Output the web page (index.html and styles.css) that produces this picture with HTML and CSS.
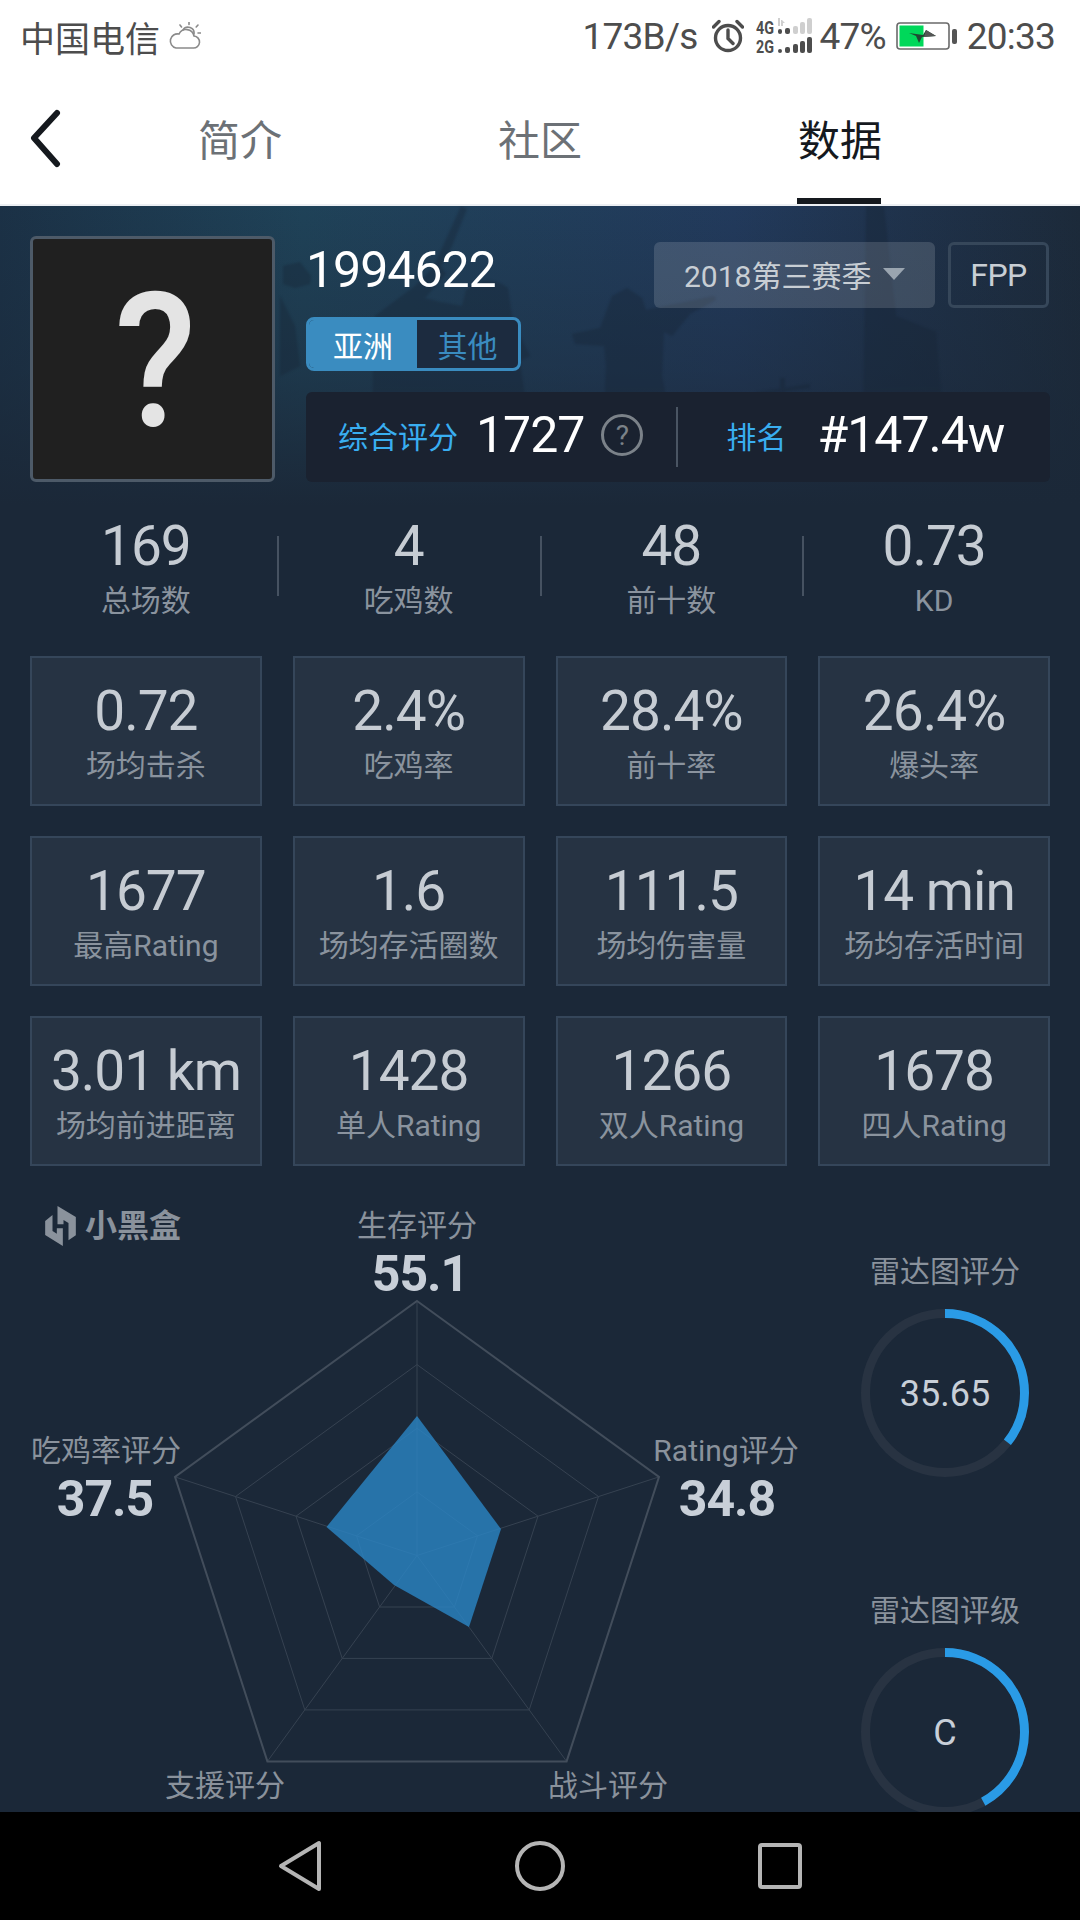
FILE: index.html
```html
<!DOCTYPE html>
<html lang="zh">
<head>
<meta charset="utf-8">
<title>数据</title>
<link rel="stylesheet" href="styles.css">
</head>
<body>
<div class="screen">
  <div class="statusbar">
    <div class="status-left">
      <span>中国电信</span>
      <svg class="ic-weather" width="32" height="28" viewBox="0 0 32 28" fill="none" stroke="#8a8a8a" stroke-width="1.6" stroke-linecap="round">
        <path d="M7 26h17a6 6 0 0 0 1-12 8 8 0 0 0-15-2 7 7 0 0 0-3 14z" fill="#fff"/>
        <path d="M14 8a6 6 0 0 1 11 4M20 0v2.500M11 3l1.500 2M29 3l-1.800 2M31.500 11h-2.500"/>
      </svg>
    </div>
    <div class="status-right">
      <span class="st-speed">173B/s</span>
      <svg class="st-alarm" width="32" height="34" viewBox="0 0 32 34" fill="none" stroke="#4d4d4d" stroke-width="3.400">
        <circle cx="16" cy="19" r="12.500"/>
        <path d="M16 11v8.500l5 5M1.500 8 7 2.500M30.500 8 25 2.500" stroke-linecap="round"/>
      </svg>
      <svg class="st-net" width="57" height="36" viewBox="0 0 57 36">
        <text class="net-text" x="0" y="15.500" textLength="18" lengthAdjust="spacingAndGlyphs">4G</text>
        <text class="net-text" x="0" y="35" textLength="18" lengthAdjust="spacingAndGlyphs">2G</text>
        <g fill="#cfcfcf">
          <rect x="37" y="8" width="5" height="8" rx="2"/><rect x="44" y="4" width="5" height="12" rx="2"/><rect x="51" y="0" width="5" height="16" rx="2"/>
          <path d="M22 0h2v8h-2zM26 2l3 3h-2v3h-2V2z"/>
        </g>
        <g fill="#4d4d4d">
          <rect x="22" y="11" width="4" height="5" rx="2"/><rect x="29" y="10" width="5" height="6" rx="2"/>
          <rect x="22" y="31" width="4" height="4" rx="2"/><rect x="29" y="29" width="5" height="6" rx="2"/><rect x="37" y="26" width="5" height="9" rx="2"/><rect x="44" y="23" width="5" height="12" rx="2"/><rect x="51" y="19" width="5" height="16" rx="2"/>
        </g>
      </svg>
      <span>47%</span>
      <svg width="61" height="28" viewBox="0 0 61 28">
        <rect x="1" y="1" width="52" height="26" rx="3" fill="#fff" stroke="#6a6a6a" stroke-width="1.600"/>
        <rect x="3.500" y="3.500" width="24" height="21" fill="#00d85a"/>
        <path d="M13 11l14 2 3-5 10 6-14 1-3 6-3-7z" fill="#1f4a33"/>
        <path d="M30 8l10 6-12 1z" fill="#555"/>
        <rect x="56" y="7" width="5" height="15" rx="2" fill="#555"/>
      </svg>
      <span>20:33</span>
    </div>
  </div>

  <nav class="nav">
    <svg class="back" width="90" height="60" viewBox="0 0 90 60" fill="none" stroke="#15191e" stroke-width="6" stroke-linecap="round" stroke-linejoin="round">
      <path d="M57 4 34 29l23 26" />
    </svg>
    <div class="tab">简介</div>
    <div class="tab">社区</div>
    <div class="tab tab-active">数据</div>
  </nav>

  <main class="main">
    <div class="hero-bg">
      <svg class="hero-art" width="1080" height="300" viewBox="0 0 1080 300">
        <g fill="#152436" fill-opacity=".36">
          <path d="M283 60 300 56 311 70 310 78 295 82 283 78ZM280 90 295 120 300 160 280 170Z"/>
          <path d="M461 0 467 3 452 40 441 60 446 68 425 92 440 96 462 100 466 84Q487 66 508 82L512 110 520 130 530 150 520 155 540 300H390L372 200 375 110 415 80 433 62Z"/>
          <path d="M612 90 627 82 642 92 646 104 714 90 716 94 690 108 682 118 672 130 664 126 662 170 668 200 672 300H600L606 160 604 140 575 138 572 128 600 122Z"/>
          <path d="M780 172h5v128h-5zM756 186l54-8v4l-54 8zM830 245h190v55H830zM690 300l36-24 40 6 34-14 40 20v12z"/>
          <path d="M866 0h18l12 110 40 16 8 100 30 74H862z"/>
        </g>
        <g fill="none" stroke="#152436" stroke-opacity=".4" stroke-width="1.500">
          <path d="M670 272l112-52 90-16M690 282l92-40 100-14"/>
        </g>
      </svg>
    </div>

    <section class="profile">
      <div class="avatar"><span class="avatar-mark">?</span></div>
      <div class="profile-info">
        <div class="profile-top">
          <div class="name-block">
            <div class="name">1994622</div>
            <div class="segmented">
              <div class="seg seg-on">亚洲</div>
              <div class="seg">其他</div>
            </div>
          </div>
          <div class="season">2018第三赛季<span class="caret"></span></div>
          <div class="mode">FPP</div>
        </div>
        <div class="rank-bar">
          <span class="rank-key">综合评分</span>
          <span class="rank-val rank-score">1727</span>
          <span class="help">?</span>
          <span class="rank-sep"></span>
          <span class="rank-key">排名</span>
          <span class="rank-val rank-pos">#147.4w</span>
        </div>
      </div>
    </section>

    <section class="stats">
      <div class="stat"><div class="val">169</div><div class="lbl">总场数</div></div>
      <div class="stat"><div class="val">4</div><div class="lbl">吃鸡数</div></div>
      <div class="stat"><div class="val">48</div><div class="lbl">前十数</div></div>
      <div class="stat"><div class="val">0.73</div><div class="lbl">KD</div></div>
    </section>

    <section class="cards">
      <div class="card"><div class="val">0.72</div><div class="lbl">场均击杀</div></div>
      <div class="card"><div class="val">2.4%</div><div class="lbl">吃鸡率</div></div>
      <div class="card"><div class="val">28.4%</div><div class="lbl">前十率</div></div>
      <div class="card"><div class="val">26.4%</div><div class="lbl">爆头率</div></div>
      <div class="card"><div class="val">1677</div><div class="lbl">最高Rating</div></div>
      <div class="card"><div class="val">1.6</div><div class="lbl">场均存活圈数</div></div>
      <div class="card"><div class="val">111.5</div><div class="lbl">场均伤害量</div></div>
      <div class="card"><div class="val">14 min</div><div class="lbl">场均存活时间</div></div>
      <div class="card"><div class="val">3.01 km</div><div class="lbl">场均前进距离</div></div>
      <div class="card"><div class="val">1428</div><div class="lbl">单人Rating</div></div>
      <div class="card"><div class="val">1266</div><div class="lbl">双人Rating</div></div>
      <div class="card"><div class="val">1678</div><div class="lbl">四人Rating</div></div>
    </section>

    <section class="chart">
      <svg class="radar" width="1080" height="646" viewBox="0 0 1080 646" fill="none">
        <g class="grid-lines">
          <path d="M417 389.500V135M417 389.500 659 310.900M417 389.500 566.600 595.400M417 389.500 267.400 595.400M417 389.500 175 310.900"/>
          <path d="M417 198.600 598.500 330.500 529.200 543.900H304.800L235.500 330.500Z"/>
          <path d="M417 262.250 538 350.200 491.800 492.400H342.200L296 350.200Z"/>
          <path d="M417 325.900 477.500 369.800 454.400 441H379.600L356.500 369.800Z"/>
        </g>
        <path class="grid-outer" d="M417 135 659 310.900 566.600 595.400H267.400L175 310.900Z"/>
        <path class="radar-data" d="M417 250 501 363 469 461 394 419 326.500 361Z"/>
      </svg>

      <div class="logo">
        <svg width="31" height="40" viewBox="15 15 92 120" fill="#8a929c">
          <path d="M15 60 37 42V90L50 98V82H68V135L15 102Z"/>
          <path d="M52 15 107 48V103L85 118V66L70 57V70H52Z"/>
        </svg>
        <span>小黑盒</span>
      </div>

      <div class="axis axis-top"><div class="axis-name">生存评分</div><div class="axis-val">55.1</div></div>
      <div class="axis axis-left"><div class="axis-name">吃鸡率评分</div><div class="axis-val">37.5</div></div>
      <div class="axis axis-right"><div class="axis-name">Rating评分</div><div class="axis-val">34.8</div></div>
      <div class="axis axis-bl"><div class="axis-name">支援评分</div></div>
      <div class="axis axis-br"><div class="axis-name">战斗评分</div></div>

      <div class="gauges">
        <div class="gauge">
          <div class="axis-name">雷达图评分</div>
          <div class="ring">
            <svg width="168" height="168" viewBox="0 0 168 168" fill="none">
              <circle class="ring-track" cx="84" cy="84" r="79.500"/>
              <circle class="ring-value" cx="84" cy="84" r="79.500" pathLength="100" stroke-dasharray="35.65 100" transform="rotate(-90 84 84)"/>
            </svg>
            <span class="ring-text">35.65</span>
          </div>
        </div>
        <div class="gauge">
          <div class="axis-name">雷达图评级</div>
          <div class="ring">
            <svg width="168" height="168" viewBox="0 0 168 168" fill="none">
              <circle class="ring-track" cx="84" cy="84" r="79.500"/>
              <circle class="ring-value" cx="84" cy="84" r="79.500" pathLength="100" stroke-dasharray="42 100" transform="rotate(-90 84 84)"/>
            </svg>
            <span class="ring-text">C</span>
          </div>
        </div>
      </div>
    </section>
  </main>

  <footer class="sysnav">
    <svg width="60" height="60" viewBox="0 0 60 60"><path d="M49 7V53L11 30Z"/></svg>
    <svg width="60" height="60" viewBox="0 0 60 60"><circle cx="30" cy="30" r="23"/></svg>
    <svg width="60" height="60" viewBox="0 0 60 60"><rect x="10" y="9" width="40" height="42" rx="2"/></svg>
  </footer>
</div>
</body>
</html>
```
FILE: styles.css
```css
* { box-sizing: border-box; }
html, body { margin: 0; padding: 0; }
body {
  font-family: Roboto, "Noto Sans CJK SC", sans-serif;
  background: #000;
}
.screen {
  width: 1080px;
  height: 1920px;
  display: flex;
  flex-direction: column;
  overflow: hidden;
  background: #1b2838;
}

/* status bar */
.statusbar {
  height: 70px;
  flex: none;
  background: #fff;
  color: #4d4d4d;
  display: flex;
  justify-content: space-between;
  align-items: center;
  padding: 2px 25px 0 20px;
}
.status-left { display: flex; align-items: center; gap: 9px; font-size: 35px; }
.status-right { display: flex; align-items: center; gap: 10px; font-size: 37px; letter-spacing: -.8px; }
.st-alarm { margin-left: 4px; }
.st-net { margin-left: 2px; margin-right: -3px; }
.net-text { font-size: 18px; font-weight: 700; fill: #4d4d4d; letter-spacing: 0; }

/* tab bar */
.nav {
  height: 136px;
  flex: none;
  background: #fff;
  border-bottom: 2px solid #eceff3;
  display: flex;
  align-items: stretch;
}
.back { align-self: center; margin-top: 4px; flex: none; }
.tab {
  width: 300px;
  position: relative;
  display: flex;
  align-items: center;
  justify-content: center;
  font-size: 42px;
  color: #6c7176;
}
.tab-active { color: #15191e; }
.tab-active::after {
  content: "";
  position: absolute;
  left: 107px;
  bottom: 0;
  width: 84px;
  height: 6px;
  background: #15191e;
}

/* main area */
.main {
  flex: 1;
  min-height: 0;
  position: relative;
  padding: 30px 30px 0;
  display: flex;
  flex-direction: column;
}
.hero-bg {
  position: absolute;
  left: 0;
  top: 0;
  width: 1080px;
  height: 300px;
  background:
    linear-gradient(180deg, rgba(27,40,56,0) 0%, rgba(27,40,56,.4) 55%, #1b2838 100%),
    linear-gradient(90deg, #1b3146 0%, #1f4258 28%, #223a5c 68%, #1c2a3a 100%);
}
.hero-art {
  display: block;
  filter: blur(1px);
  -webkit-mask-image: linear-gradient(180deg, #000 60%, transparent 92%);
  mask-image: linear-gradient(180deg, #000 60%, transparent 92%);
}
.profile, .stats, .cards, .chart { position: relative; }

.profile { display: flex; gap: 31px; height: 246px; flex: none; }
.avatar {
  width: 245px;
  height: 246px;
  flex: none;
  background: #202020;
  border: 3px solid #4d5a68;
  border-radius: 6px;
  display: flex;
  align-items: center;
  justify-content: center;
  font-size: 187px;
  line-height: 1;
  font-weight: 500;
  color: #e4e4e4;
}
.avatar-mark { display: inline-block; transform: translate(3px, 3px) scaleX(.9); }
.profile-info { flex: 1; display: flex; flex-direction: column; justify-content: space-between; }
.profile-top { display: flex; align-items: flex-start; }
.name-block { flex: 1; }
.name { font-size: 50px; letter-spacing: -1px; line-height: 60px; color: #fff; margin-top: 4px; }
.segmented {
  width: 215px;
  height: 54px;
  margin-top: 17px;
  display: flex;
  border: 3px solid #3a8cc0;
  border-radius: 8px;
  overflow: hidden;
  font-size: 30px;
  color: #3a8cc0;
  background: #1c2b3f;
}
.seg { flex: 1; display: flex; align-items: center; justify-content: center; }
.seg-on { flex: none; width: 108px; background: #3a8cc0; color: #fff; }
.season {
  width: 281px;
  height: 66px;
  margin-top: 6px;
  background: rgba(255,255,255,.14);
  border-radius: 6px;
  display: flex;
  align-items: center;
  padding: 0 0 3px 30px;
  font-size: 30px;
  color: #c8ced4;
}
.caret {
  width: 0;
  height: 0;
  margin-left: 12px;
  border-left: 11px solid transparent;
  border-right: 11px solid transparent;
  border-top: 12px solid #9aa5b0;
}
.mode {
  width: 101px;
  height: 66px;
  margin: 6px 1px 0 13px;
  border: 3px solid #36475a;
  border-radius: 6px;
  display: flex;
  align-items: center;
  justify-content: center;
  font-size: 32px;
  letter-spacing: -.5px;
  color: #c8ced4;
}
.rank-bar {
  height: 90px;
  background: #1a2230;
  border-radius: 6px;
  display: flex;
  align-items: center;
  padding: 0 0 4px 32px;
  color: #fff;
}
.rank-key { font-size: 30px; color: #39aef0; }
.rank-val { font-size: 50px; letter-spacing: -1px; }
.rank-score { margin-left: 18px; }
.help {
  width: 42px;
  height: 42px;
  margin-left: 17px;
  border: 3px solid #7b8289;
  border-radius: 50%;
  display: flex;
  align-items: center;
  justify-content: center;
  font-size: 28px;
  color: #7b8289;
}
.rank-sep { width: 2px; height: 60px; margin: 4px 48px 0 33px; background: #4a5563; }
.rank-pos { margin-left: 31px; }

.val { font-size: 55px; letter-spacing: -1px; line-height: 60px; margin-top: 1px; color: #c6ccd3; white-space: nowrap; }
.lbl { font-size: 30px; line-height: 40px; margin-top: 5px; color: #8a939e; white-space: nowrap; }

.stats {
  flex: none;
  margin-top: 33px;
  display: grid;
  grid-template-columns: repeat(4, 1fr);
  column-gap: 31px;
  text-align: center;
}
.stat { position: relative; }
.stat + .stat::before {
  content: "";
  position: absolute;
  left: -16px;
  top: 21px;
  width: 2px;
  height: 60px;
  background: #465261;
}

.cards {
  flex: none;
  margin-top: 35px;
  display: grid;
  grid-template-columns: repeat(4, 1fr);
  column-gap: 31px;
  row-gap: 30px;
  text-align: center;
}
.card {
  height: 150px;
  padding-top: 22px;
  background: #263343;
  border: 2px solid #35465a;
}

/* radar diagram */
.chart {
  flex: 1;
  min-height: 0;
  margin: 0 -30px;
  overflow: hidden;
}
.radar { position: absolute; left: 0; top: 0; }
.grid-lines path { stroke: #364251; stroke-width: 1; }
.grid-outer { stroke: #424d5b; stroke-width: 2; }
.radar-data { fill: #2a86c6; fill-opacity: .8; }

.logo {
  position: absolute;
  left: 45px;
  top: 40px;
  display: flex;
  align-items: center;
  gap: 9px;
  font-size: 32px;
  line-height: 40px;
  font-weight: 700;
  color: #8a929c;
}
.axis {
  position: absolute;
  width: 240px;
  margin-left: -120px;
  text-align: center;
}
.axis-name { font-size: 30px; line-height: 40px; color: #8a929c; white-space: nowrap; }
.axis-val { font-size: 50px; letter-spacing: -1px; line-height: 50px; margin-top: 3px; font-weight: 700; color: #c8cfd8; }
.axis-top { left: 417px; top: 40px; }
.axis-top .axis-val { margin-left: 6px; }
.axis-left { left: 106px; top: 265px; }
.axis-left .axis-val { margin-right: 2px; }
.axis-right { left: 726px; top: 265px; }
.axis-right .axis-val { margin-left: 2px; }
.axis-bl { left: 225px; top: 600px; }
.axis-br { left: 608px; top: 600px; }

.gauges {
  position: absolute;
  left: 861px;
  top: 86px;
  width: 168px;
  display: flex;
  flex-direction: column;
  gap: 114px;
  text-align: center;
}
.ring {
  position: relative;
  width: 168px;
  height: 168px;
  margin-top: 17px;
  display: flex;
  align-items: center;
  justify-content: center;
}
.ring svg { position: absolute; left: 0; top: 0; }
.ring-track { stroke: #283342; stroke-width: 9; }
.ring-value { stroke: #2a9be6; stroke-width: 9; }
.ring-text { position: relative; top: 1px; font-size: 36px; color: #c8cfd8; }

/* system navigation */
.sysnav {
  height: 108px;
  flex: none;
  background: #000;
  display: flex;
  align-items: center;
  justify-content: center;
  gap: 180px;
  position: relative;
}
.sysnav svg * { fill: none; stroke: #b5b5b5; stroke-width: 4; stroke-linejoin: round; }
```
